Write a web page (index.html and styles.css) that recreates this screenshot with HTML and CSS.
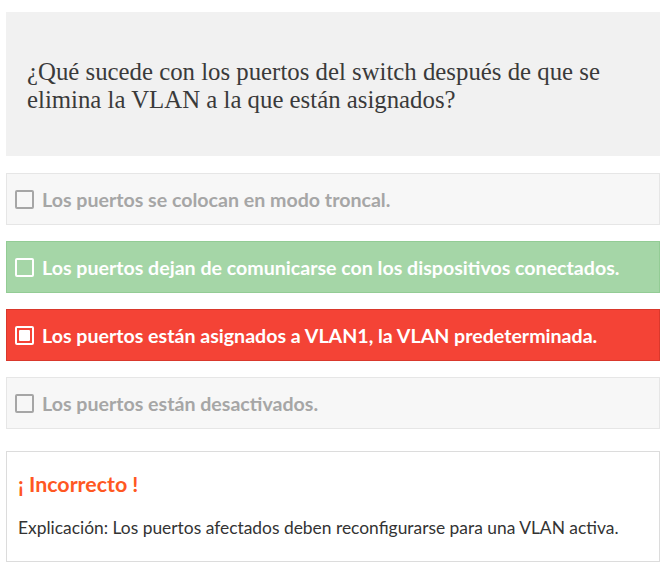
FILE: index.html
```html
<!DOCTYPE html>
<html lang="es">
<head>
<meta charset="utf-8">
<link rel="stylesheet" href="styles.css">
</head>
<body>
<div class="quiz">
  <div class="question">¿Qué sucede con los puertos del switch después de que se elimina la VLAN a la que están asignados?</div>
  <ul class="options">
    <li class="option"><span class="box"></span>Los puertos se colocan en modo troncal.</li>
    <li class="option correct"><span class="box"></span>Los puertos dejan de comunicarse con los dispositivos conectados.</li>
    <li class="option wrong"><span class="box checked"></span>Los puertos están asignados a VLAN1, la VLAN predeterminada.</li>
    <li class="option"><span class="box"></span>Los puertos están desactivados.</li>
  </ul>
  <div class="feedback">
    <div class="verdict">¡ Incorrecto !</div>
    <p class="explain">Explicación: Los puertos afectados deben reconfigurarse para una VLAN activa.</p>
  </div>
</div>
</body>
</html>
```

FILE: styles.css
```css
* { box-sizing: border-box; }
body {
  margin: 0;
  background: #fff;
  font-family: Lato, "Liberation Sans", sans-serif;
}
.quiz {
  width: 654px;
  margin: 12px 0 0 6px;
}
.question {
  background: #f1f1f1;
  height: 144px;
  padding: 46px 21px 0 21px;
  font-family: "Liberation Serif", serif;
  font-size: 24.8px;
  line-height: 28px;
  color: #3a3a3a;
}
.options {
  list-style: none;
  margin: 17px 0 0 0;
  padding: 0;
  display: flex;
  flex-direction: column;
  gap: 16px;
}
.option {
  height: 52px;
  display: flex;
  align-items: center;
  gap: 8px;
  padding-left: 8px;
  padding-top: 1px;
  background: #f7f7f7;
  border: 1px solid #e6e6e6;
  color: #a6a6a6;
  font-weight: 700;
  font-size: 19.6px;
}
.option.correct {
  background: #a5d6a7;
  border-color: #93cc95;
  color: #fff;
}
.option.wrong {
  background: #f44336;
  border-color: #d9382c;
  color: #fff;
}
.box {
  width: 19px;
  height: 19px;
  border: 2px solid #a6a6a6;
  border-radius: 2px;
  flex: none;
  display: flex;
  align-items: center;
  justify-content: center;
}
.correct .box, .wrong .box { border-color: #fff; }
.box.checked::after {
  content: "";
  width: 11px;
  height: 11px;
  background: #fff;
  border-radius: 1px;
}
.feedback {
  margin-top: 22px;
  height: 111px;
  border: 1px solid #dcdcdc;
  padding: 19px 11px 0 11px;
}
.verdict {
  color: #ff5722;
  font-weight: 700;
  font-size: 21.4px;
  line-height: 26px;
}
.explain {
  margin: 21px 0 0 0;
  font-size: 17.4px;
  line-height: 20px;
  color: #333;
}
```
